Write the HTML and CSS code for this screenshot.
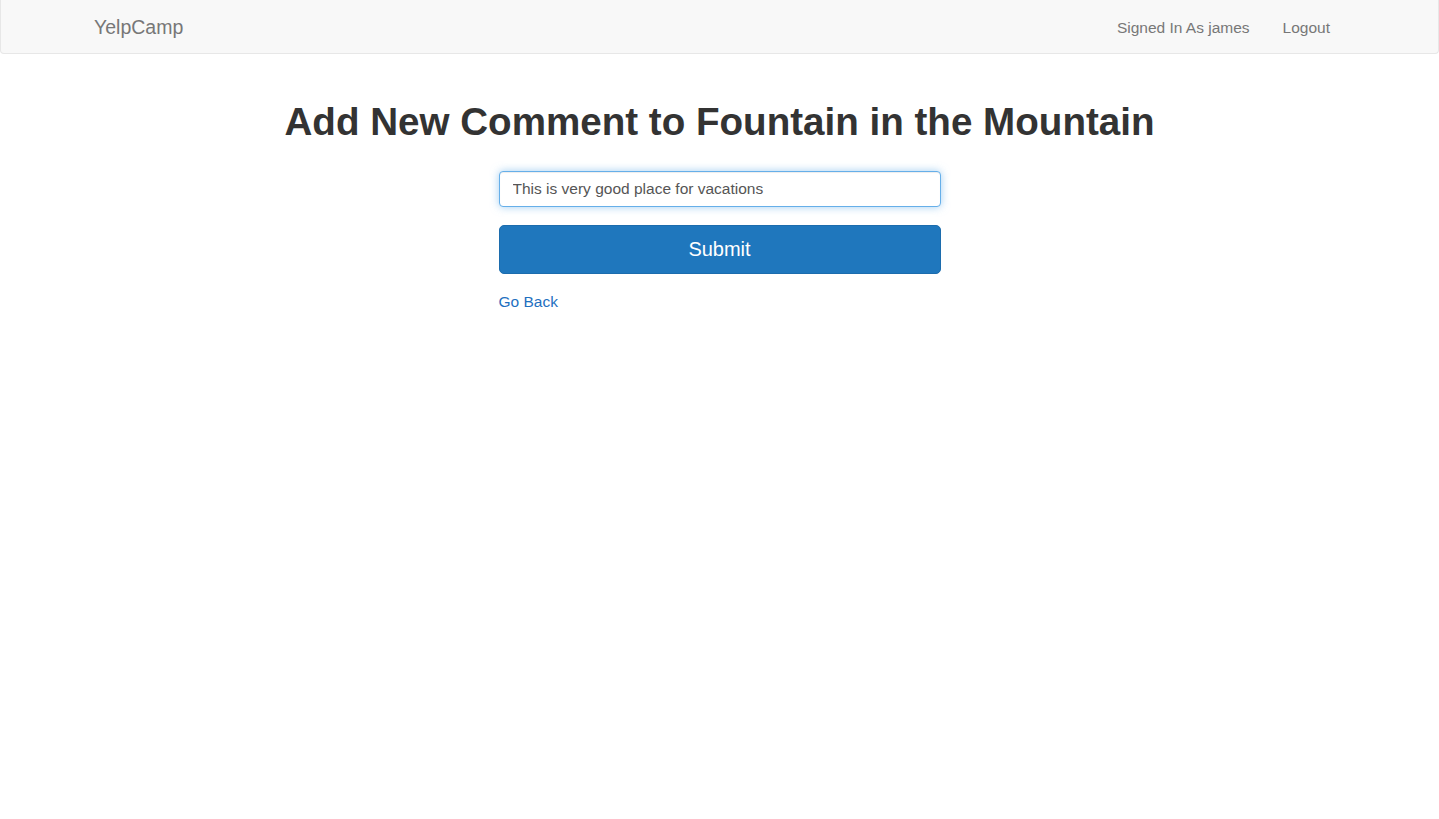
FILE: index.html
```html
<!DOCTYPE html>
<html lang="en">
<head>
<meta charset="utf-8">
<title>YelpCamp</title>
<link rel="stylesheet" href="styles.css">
</head>
<body>
<nav class="navbar">
  <a class="brand" href="#">YelpCamp</a>
  <ul class="nav-right">
    <li><a href="#">Signed In As james</a></li>
    <li><a href="#">Logout</a></li>
  </ul>
</nav>
<main class="page">
  <h1 class="title">Add New Comment to Fountain in the Mountain</h1>
  <form class="comment-form">
    <input class="text-input" type="text" value="This is very good place for vacations">
    <button class="btn-submit" type="button">Submit</button>
    <a class="back-link" href="#">Go Back</a>
  </form>
</main>
</body>
</html>
```
FILE: styles.css
```css
html, body {
  margin: 0;
  padding: 0;
  background: #fff;
}
body {
  font-family: "Liberation Sans", Arial, Helvetica, sans-serif;
  color: #333;
}
.navbar {
  box-sizing: border-box;
  height: 54px;
  width: 1439px;
  background: #f8f8f8;
  border: 1px solid #e7e7e7;
  border-top: none;
  border-radius: 0 0 4px 4px;
  display: flex;
  align-items: center;
  justify-content: space-between;
  padding: 2px 108px 0 93px;
}
.brand {
  font-size: 19.5px;
  color: #777;
  text-decoration: none;
}
.nav-right {
  list-style: none;
  margin: 0;
  padding: 0;
  display: flex;
  gap: 33px;
}
.nav-right a {
  font-size: 15.5px;
  color: #777;
  text-decoration: none;
}
.page {
  display: flex;
  flex-direction: column;
  align-items: center;
}
.title {
  margin: 46px 0 0;
  font-size: 38.6px;
  line-height: 44px;
  font-weight: bold;
  color: #333;
}
.comment-form {
  width: 442px;
  display: flex;
  flex-direction: column;
  margin-top: 27px;
}
.text-input {
  box-sizing: border-box;
  height: 36px;
  width: 100%;
  padding: 0 13px;
  font-family: inherit;
  font-size: 15.5px;
  color: #555;
  background: #fff;
  border: 1px solid #66afe9;
  border-radius: 4px;
  outline: none;
  box-shadow: inset 0 1px 1px rgba(0,0,0,.075), 0 0 8px rgba(102,175,233,.6);
}
.btn-submit {
  box-sizing: border-box;
  margin-top: 18px;
  height: 49px;
  width: 100%;
  font-family: inherit;
  font-size: 20px;
  color: #fff;
  background: #1f77bd;
  border: 1px solid #1c6cad;
  border-radius: 5px;
  cursor: pointer;
}
.back-link {
  margin-top: 17px;
  font-size: 15.5px;
  line-height: 21px;
  color: #1f70bf;
  text-decoration: none;
  align-self: flex-start;
}
```
